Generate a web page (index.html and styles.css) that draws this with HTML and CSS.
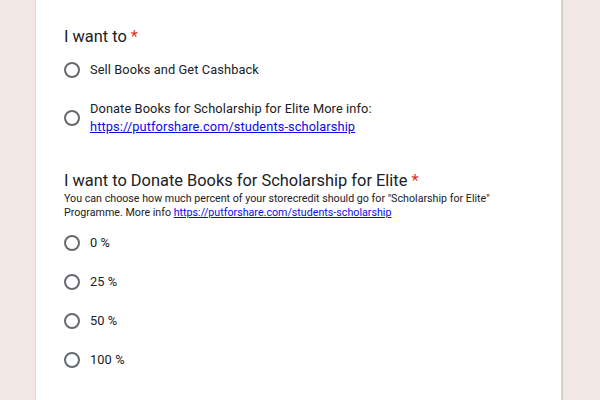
FILE: index.html
```html
<!DOCTYPE html>
<html>
<head>
<meta charset="utf-8">
<link rel="stylesheet" href="styles.css">
</head>
<body>
<div class="page">
  <div class="card">
    <div class="question">
      <div class="qtitle">I want to <span class="req">*</span></div>
      <div class="options first">
        <div class="opt"><span class="radio"></span><span class="label">Sell Books and Get Cashback</span></div>
        <div class="opt"><span class="radio"></span><span class="label">Donate Books for Scholarship for Elite More info:<br><a href="#">https://putforshare.com/students-scholarship</a></span></div>
      </div>
    </div>
    <div class="question q2">
      <div class="qtitle">I want to Donate Books for Scholarship for Elite <span class="req">*</span></div>
      <div class="desc">You can choose how much percent of your storecredit should go for "Scholarship for Elite" Programme. More info <a href="#">https://putforshare.com/students-scholarship</a></div>
      <div class="options pct">
        <div class="opt"><span class="radio"></span><span class="label">0 %</span></div>
        <div class="opt"><span class="radio"></span><span class="label">25 %</span></div>
        <div class="opt"><span class="radio"></span><span class="label">50 %</span></div>
        <div class="opt"><span class="radio"></span><span class="label">100 %</span></div>
      </div>
    </div>
  </div>
</div>
</body>
</html>
```
FILE: styles.css
```css
html, body {
  margin: 0;
  padding: 0;
  height: 100%;
}
body {
  background: #f1e8e6;
  font-family: Roboto, "Liberation Sans", Arial, sans-serif;
  color: #202124;
  overflow: hidden;
}
.page {
  display: flex;
  justify-content: flex-start;
  padding-left: 35px;
  height: 100%;
}
.card {
  width: 527px;
  background: #fff;
  border-left: 1px solid #dadce0;
  border-right: 1px solid #d6d3d2;
  box-shadow: 1px 0 1px rgba(0,0,0,0.10);
  padding: 0 0 0 28px;
  box-sizing: border-box;
  height: 100%;
}
.question {
  padding-top: 27px;
}
.qtitle {
  font-size: 16.4px;
  line-height: 20px;
  color: #202124;
}
.req {
  color: #d93025;
}
.options {
  display: flex;
  flex-direction: column;
}
.options.first {
  margin-top: 14px;
  gap: 21px;
}
.opt {
  display: flex;
  align-items: center;
  font-size: 12.8px;
  line-height: 18px;
  letter-spacing: 0.1px;
}
.radio {
  width: 16px;
  height: 16px;
  border: 2px solid #666a6e;
  border-radius: 50%;
  box-sizing: border-box;
  flex: none;
  margin-right: 10px;
}
.label a, .desc a {
  color: #0b0be8;
  text-decoration: underline;
}
.q2 {
  padding-top: 35px;
}
.desc {
  font-size: 10.7px;
  line-height: 14px;
  margin-top: 1px;
  width: 440px;
}
.options.pct {
  margin-top: 14px;
  gap: 21.1px;
}
```
